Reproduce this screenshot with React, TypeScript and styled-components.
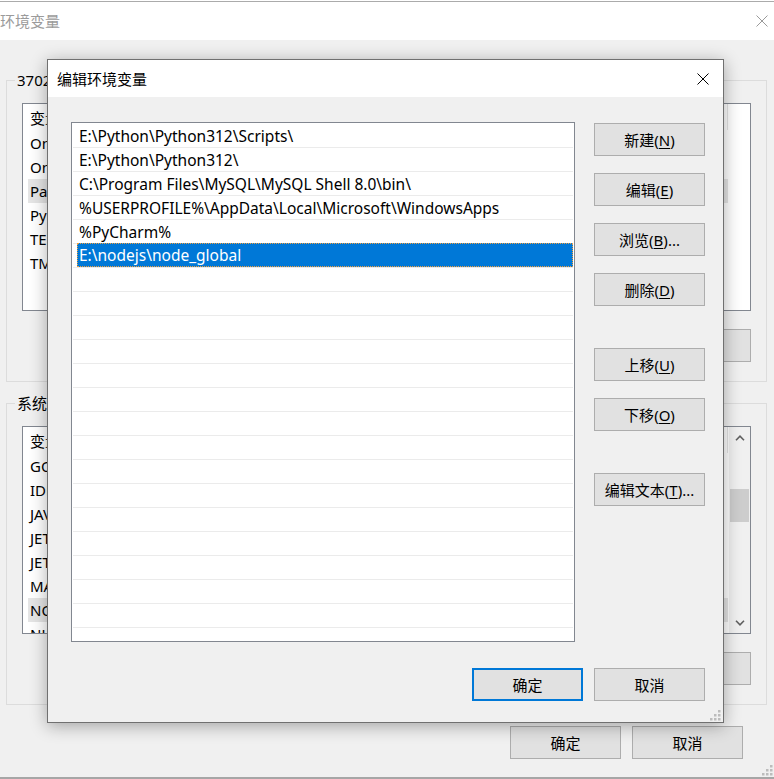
import React from "react";
import styled, { createGlobalStyle } from "styled-components";

const UI_FONT = `"Noto Sans", "Noto Sans CJK SC", sans-serif`;

const GlobalStyle = createGlobalStyle`
  html, body { margin: 0; padding: 0; background: #ffffff; }
  body { font-family: ${UI_FONT}; font-size: 15px; color: #000; overflow: hidden; }
  #root { width: 774px; height: 779px; }
  * { box-sizing: border-box; }
`;

/* ---------- background window ---------- */

const Desktop = styled.div`
  position: relative;
  width: 774px;
  height: 779px;
  overflow: hidden;
  background: #ffffff;
  padding-top: 1px;
`;

const Window = styled.div`
  position: relative;
  display: flex;
  flex-direction: column;
  height: 778px;
  background: #f0f0f0;
  border-top: 1px solid #ababab;
  border-bottom: 2px solid #a6a6a6;
`;

const TitleBar = styled.div<{ $h: number; $pl: number; $pr: number }>`
  display: flex;
  align-items: center;
  justify-content: space-between;
  flex: none;
  height: ${(p) => p.$h}px;
  padding: 0 ${(p) => p.$pr}px 0 ${(p) => p.$pl}px;
  background: #ffffff;
`;

const TitleText = styled.span<{ $inactive?: boolean }>`
  font-size: 15px;
  line-height: 20px;
  color: ${(p) => (p.$inactive ? "#9b9b9b" : "#000")};
`;

const Content = styled.div`
  display: flex;
  flex-direction: column;
  padding: 40px 7px 0 6px;
`;

const GroupBox = styled.div<{ $mt?: number }>`
  position: relative;
  display: flex;
  flex-direction: column;
  gap: 18px;
  margin-top: ${(p) => p.$mt ?? 0}px;
  padding: 22px 15px 19px 15px;
  border: 1px solid #dcdcdc;
`;

const Legend = styled.span`
  position: absolute;
  top: -11px;
  left: 8px;
  padding: 0 2px;
  line-height: 20px;
  background: #f0f0f0;
  white-space: nowrap;
`;

const ListView = styled.div`
  display: flex;
  height: 208px;
  background: #fff;
  border: 1px solid #828790;
  overflow: hidden;
`;

const ListColumn = styled.div`
  flex: 1;
  display: flex;
  flex-direction: column;
  min-width: 0;
`;

const ListHeader = styled.div`
  display: flex;
  flex: none;
  height: 27px;
`;

const HeaderCell = styled.div<{ $w?: number }>`
  display: flex;
  align-items: center;
  width: ${(p) => (p.$w ? `${p.$w}px` : "auto")};
  flex: ${(p) => (p.$w ? "none" : "1")};
  height: 26px;
  padding-left: 7px;
  border-right: ${(p) => (p.$w ? "1px solid #e5e5e5" : "none")};
`;

const VarRow = styled.div<{ $hl?: boolean }>`
  display: flex;
  align-items: center;
  flex: none;
  height: 24px;
  width: 700px;
  margin-left: 5px;
  padding-left: 2px;
  white-space: nowrap;
  background: ${(p) => (p.$hl ? "#e5e5e5" : "transparent")};
`;

const ScrollBar = styled.div`
  display: flex;
  flex-direction: column;
  width: 21px;
  flex: none;
  background: #f0f0f0;
`;

const ScrollArrow = styled.div`
  display: flex;
  align-items: center;
  justify-content: center;
  height: 21px;
  flex: none;
`;

const ScrollTrack = styled.div`
  flex: 1;
  padding: 41px 1px 0 1px;
`;

const ScrollThumb = styled.div`
  height: 33px;
  background: #cdcdcd;
`;

const ButtonRow = styled.div<{ $pr?: number; $mt?: number }>`
  display: flex;
  justify-content: flex-end;
  gap: 11px;
  margin-top: ${(p) => p.$mt ?? 0}px;
  padding-right: ${(p) => p.$pr ?? 0}px;
`;

const Btn = styled.button<{ $default?: boolean; $mt?: number }>`
  flex: none;
  width: 111px;
  height: 33px;
  margin: ${(p) => p.$mt ?? 0}px 0 0 0;
  padding: 0;
  font-family: ${UI_FONT};
  font-size: 15px;
  color: #000;
  background: #e1e1e1;
  border: ${(p) => (p.$default ? "2px solid #0078d7" : "1px solid #adadad")};
  border-radius: 0;
  white-space: nowrap;
  u { text-decoration-thickness: 1px; text-underline-offset: 2px; }
`;

const Grip = styled.svg<{ $r: number; $b: number }>`
  position: absolute;
  right: ${(p) => p.$r}px;
  bottom: ${(p) => p.$b}px;
`;

/* ---------- dialog ---------- */

const Dialog = styled.div`
  position: absolute;
  left: 47px;
  top: 59px;
  width: 677px;
  height: 664px;
  display: flex;
  flex-direction: column;
  background: #f0f0f0;
  border: 1px solid #707070;
  box-shadow: 0 3px 16px rgba(0, 0, 0, 0.32);
`;

const DialogBody = styled.div`
  display: grid;
  grid-template-columns: 504px 111px;
  column-gap: 19px;
  padding: 25px 18px 0 23px;
`;

const PathList = styled.div`
  display: flex;
  flex-direction: column;
  height: 520px;
  padding-top: 1px;
  background: #fff;
  border: 1px solid #828790;
  overflow: hidden;
`;

const PathRow = styled.div`
  display: flex;
  flex: none;
  height: 24px;
  margin: 0 1px;
  padding-left: 4px;
  border-bottom: 1px solid #ebebeb;
`;

const PathCell = styled.div<{ $sel?: boolean }>`
  flex: 1;
  display: flex;
  align-items: center;
  padding-left: ${(p) => (p.$sel ? 1 : 2)}px;
  font-size: 15.5px;
  white-space: nowrap;
  color: ${(p) => (p.$sel ? "#fff" : "#000")};
  background: ${(p) => (p.$sel ? "#0078d7" : "transparent")};
  border: ${(p) => (p.$sel ? "1px dotted #f0a040" : "none")};
  margin-top: ${(p) => (p.$sel ? -1 : 0)}px;
`;

const SideButtons = styled.div`
  display: flex;
  flex-direction: column;
  padding-top: 1px;
`;

const CloseIcon: React.FC<{ color: string }> = ({ color }) => (
  <svg width="12" height="12" viewBox="0 0 12 12">
    <path d="M0.5 0.5 L11.5 11.5 M11.5 0.5 L0.5 11.5" stroke={color} strokeWidth="1" fill="none" />
  </svg>
);

const Chevron: React.FC<{ up?: boolean }> = ({ up }) => (
  <svg width="10" height="6" viewBox="0 0 10 6">
    <path
      d={up ? "M1 5.2 L5 1.2 L9 5.2" : "M1 0.8 L5 4.8 L9 0.8"}
      stroke="#606060"
      strokeWidth="1.6"
      fill="none"
    />
  </svg>
);

const GripDots: React.FC<{ r: number; b: number }> = ({ r, b }) => (
  <Grip $r={r} $b={b} width="12" height="12" viewBox="0 0 12 12">
    {[
      [8, 0],
      [4, 4],
      [8, 4],
      [0, 8],
      [4, 8],
      [8, 8],
    ].map(([x, y], i) => (
      <rect key={i} x={x + 1} y={y + 1} width="2.5" height="2.5" fill="#bcbcbc" />
    ))}
  </Grip>
);

const userVars = ["OneDrive", "OneDriveConsumer", "Path", "PyCharm", "TEMP", "TMP"];
const sysVars = [
  "GOPATH",
  "IDEA_VM_OPTIONS",
  "JAVA_HOME",
  "JETBRAINS_CLIENT_VM_OPTIONS",
  "JETBRAINSCLIENT_VM_OPTIONS",
  "MAVEN_HOME",
  "NODE_PATH",
  "NUMBER_OF_PROCESSORS",
];

const paths = [
  "E:\\Python\\Python312\\Scripts\\",
  "E:\\Python\\Python312\\",
  "C:\\Program Files\\MySQL\\MySQL Shell 8.0\\bin\\",
  "%USERPROFILE%\\AppData\\Local\\Microsoft\\WindowsApps",
  "%PyCharm%",
  "E:\\nodejs\\node_global",
];

const Key: React.FC<{ label: string; k: string; dots?: boolean }> = ({ label, k, dots }) => (
  <>
    {label}(<u>{k}</u>){dots ? "..." : ""}
  </>
);

export default function App() {
  const emptyRows = Array.from({ length: 15 });
  return (
    <>
      <GlobalStyle />
      <Desktop>
        <Window>
          <TitleBar $h={38} $pl={0} $pr={6}>
            <TitleText $inactive>环境变量</TitleText>
            <CloseIcon color="#9a9a9a" />
          </TitleBar>
          <Content>
            <GroupBox>
              <Legend>37022 的用户变量(U)</Legend>
              <ListView>
                <ListColumn>
                  <ListHeader>
                    <HeaderCell $w={705}>变量</HeaderCell>
                    <HeaderCell />
                  </ListHeader>
                  {userVars.map((v) => (
                    <VarRow key={v} $hl={v === "Path"}>
                      {v}
                    </VarRow>
                  ))}
                </ListColumn>
              </ListView>
              <ButtonRow>
                <Btn>
                  <Key label="新建" k="N" dots />
                </Btn>
                <Btn>
                  <Key label="编辑" k="E" dots />
                </Btn>
                <Btn>
                  <Key label="删除" k="D" />
                </Btn>
              </ButtonRow>
            </GroupBox>
            <GroupBox $mt={21}>
              <Legend>系统变量(S)</Legend>
              <ListView>
                <ListColumn>
                  <ListHeader>
                    <HeaderCell $w={705}>变量</HeaderCell>
                  </ListHeader>
                  {sysVars.map((v) => (
                    <VarRow key={v} $hl={v === "NODE_PATH"}>
                      {v}
                    </VarRow>
                  ))}
                </ListColumn>
                <ScrollBar>
                  <ScrollArrow>
                    <Chevron up />
                  </ScrollArrow>
                  <ScrollTrack>
                    <ScrollThumb />
                  </ScrollTrack>
                  <ScrollArrow>
                    <Chevron />
                  </ScrollArrow>
                </ScrollBar>
              </ListView>
              <ButtonRow>
                <Btn>
                  <Key label="新建" k="W" dots />
                </Btn>
                <Btn>
                  <Key label="编辑" k="I" dots />
                </Btn>
                <Btn>
                  <Key label="删除" k="L" />
                </Btn>
              </ButtonRow>
            </GroupBox>
            <ButtonRow $mt={21} $pr={24}>
              <Btn>确定</Btn>
              <Btn>取消</Btn>
            </ButtonRow>
          </Content>
          <GripDots r={1} b={1} />
        </Window>

        <Dialog>
          <TitleBar $h={37} $pl={9} $pr={14}>
            <TitleText>编辑环境变量</TitleText>
            <CloseIcon color="#000" />
          </TitleBar>
          <DialogBody>
            <PathList>
              {paths.map((p, i) => (
                <PathRow key={p}>
                  <PathCell $sel={i === paths.length - 1}>{p}</PathCell>
                </PathRow>
              ))}
              {emptyRows.map((_, i) => (
                <PathRow key={`e${i}`}>
                  <PathCell />
                </PathRow>
              ))}
            </PathList>
            <SideButtons>
              <Btn>
                <Key label="新建" k="N" />
              </Btn>
              <Btn $mt={17}>
                <Key label="编辑" k="E" />
              </Btn>
              <Btn $mt={17}>
                <Key label="浏览" k="B" dots />
              </Btn>
              <Btn $mt={17}>
                <Key label="删除" k="D" />
              </Btn>
              <Btn $mt={42}>
                <Key label="上移" k="U" />
              </Btn>
              <Btn $mt={17}>
                <Key label="下移" k="O" />
              </Btn>
              <Btn $mt={42}>
                <Key label="编辑文本" k="T" dots />
              </Btn>
            </SideButtons>
          </DialogBody>
          <ButtonRow $mt={26} $pr={18}>
            <Btn $default>确定</Btn>
            <Btn>取消</Btn>
          </ButtonRow>
          <GripDots r={2} b={1} />
        </Dialog>
      </Desktop>
    </>
  );
}
